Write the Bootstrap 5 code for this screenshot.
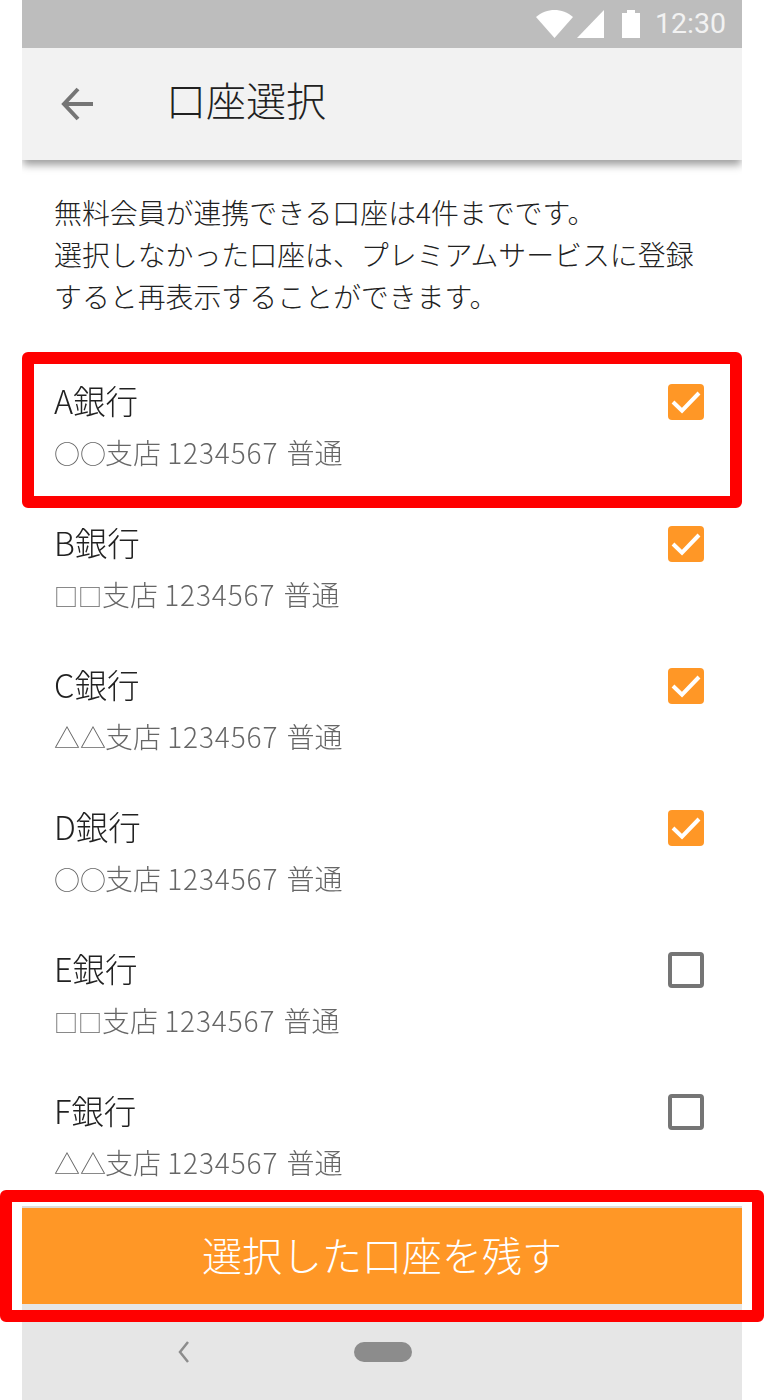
<!DOCTYPE html>
<html lang="ja">
<head>
<meta charset="utf-8">
<title>口座選択</title>
<link href="https://cdn.jsdelivr.net/npm/bootstrap@5.3.0/dist/css/bootstrap.min.css" rel="stylesheet">
<style>
html,body{margin:0;background:#fff;}
body{font-family:"Noto Sans CJK JP","Noto Sans",sans-serif;font-weight:300;color:#212121;height:1400px;overflow:hidden;}
.phone{width:720px;height:1400px;margin-left:22px;}
.statusbar{height:48px;background:#bdbdbd;color:#f2f2f2;padding-right:16px;font-family:Roboto,sans-serif;font-size:28.500px;font-weight:400;}
.appbar{height:112px;background:#f2f2f2;box-shadow:0 6px 8px -1px rgba(0,0,0,.38);clip-path:inset(0 0 -24px 0);padding-left:38px;position:relative;}
.appbar-title{font-size:40px;margin-left:70px;line-height:1;margin-top:-10px;}
.intro{font-size:27.9px;line-height:42px;padding:31px 33px 0 32px;margin:0;height:194px;}
.acct{height:142px;padding:28px 38px 0 32px;}
.acct-name{font-size:32.500px;line-height:36px;}
.acct-sub{font-size:28px;line-height:36px;margin-top:16px;color:#666;}
.sym{font-size:26px;margin-right:-1px;}
.sym-sq{font-size:24px;}
.num{letter-spacing:.9px;margin-right:2px;}
.box{width:36px;height:36px;border-radius:4px;flex:none;margin-top:2px;}
.box-on{background:#ff9726;}
.box-off{border:4px solid #757575;}
.list-area{height:852px;overflow:hidden;will-change:transform;}
.cta-wrap{height:98px;}
.cta{display:block;width:100%;height:98px;border:0;border-top:2px solid #dcdcdc;border-radius:0;background:#ff9726;color:#fff;font-size:40px;font-weight:300;padding:0 0 4px;}
.navbar-bottom{height:96px;background:#e6e6e6;padding:36px 0 0 154px;}
.pill{width:58px;height:20px;border-radius:10px;background:#8c8c8c;margin:2px 0 0 162px;}
.hl{position:absolute;border:12px solid #f00;border-radius:6px;pointer-events:none;}
.hl-a{left:22px;top:352px;width:720px;height:156px;}
.hl-b{left:0;top:1190px;width:764px;height:132px;}
.gap-batt{margin:0 15px 0 18px;}
</style>
</head>
<body>
<div class="phone">
  <div class="statusbar d-flex align-items-center justify-content-end">
    <svg width="37" height="28" viewBox="0 0 37 28" class="me-1"><path d="M0 7C5 2.500 12 0 18.500 0S32 2.500 37 7L18.500 28z" fill="#fff"/></svg>
    <svg width="27" height="28" viewBox="0 0 27 28"><path d="M27 0v28H0z" fill="#fff"/></svg>
    <svg width="18" height="28" viewBox="0 0 18 28" class="gap-batt"><path d="M5 0h8v3h5v25H0V3h5z" fill="#fff"/></svg>
    <span>12:30</span>
  </div>
  <header class="appbar d-flex align-items-center">
    <svg width="36" height="36" viewBox="0 0 36 36"><path d="M33 18H5M18 3 4 18l14 15" fill="none" stroke="#757575" stroke-width="4"/></svg>
    <div class="appbar-title">口座選択</div>
  </header>
  <p class="intro">無料会員が連携できる口座は4件までです。<br>選択しなかった口座は、プレミアムサービスに登録<br>すると再表示することができます。</p>
  <div class="list-area">
    <div class="acct d-flex justify-content-between"><div><div class="acct-name">A銀行</div><div class="acct-sub"><span class="sym">○○</span>支店 <span class="num">1234567</span> 普通</div></div><div class="box box-on"><svg width="36" height="36" viewBox="0 0 36 36"><path d="M5 18l9 8.700L31 9" fill="none" stroke="#fff" stroke-width="4"/></svg></div></div>
    <div class="acct d-flex justify-content-between"><div><div class="acct-name">B銀行</div><div class="acct-sub"><span class="sym-sq">□□</span>支店 <span class="num">1234567</span> 普通</div></div><div class="box box-on"><svg width="36" height="36" viewBox="0 0 36 36"><path d="M5 18l9 8.700L31 9" fill="none" stroke="#fff" stroke-width="4"/></svg></div></div>
    <div class="acct d-flex justify-content-between"><div><div class="acct-name">C銀行</div><div class="acct-sub"><span class="sym">△△</span>支店 <span class="num">1234567</span> 普通</div></div><div class="box box-on"><svg width="36" height="36" viewBox="0 0 36 36"><path d="M5 18l9 8.700L31 9" fill="none" stroke="#fff" stroke-width="4"/></svg></div></div>
    <div class="acct d-flex justify-content-between"><div><div class="acct-name">D銀行</div><div class="acct-sub"><span class="sym">○○</span>支店 <span class="num">1234567</span> 普通</div></div><div class="box box-on"><svg width="36" height="36" viewBox="0 0 36 36"><path d="M5 18l9 8.700L31 9" fill="none" stroke="#fff" stroke-width="4"/></svg></div></div>
    <div class="acct d-flex justify-content-between"><div><div class="acct-name">E銀行</div><div class="acct-sub"><span class="sym-sq">□□</span>支店 <span class="num">1234567</span> 普通</div></div><div class="box box-off"></div></div>
    <div class="acct d-flex justify-content-between"><div><div class="acct-name">F銀行</div><div class="acct-sub"><span class="sym">△△</span>支店 <span class="num">1234567</span> 普通</div></div><div class="box box-off"></div></div>
  </div>
  <div class="cta-wrap"><button class="btn cta" type="button">選択した口座を残す</button></div>
  <div class="navbar-bottom d-flex align-items-start">
    <svg width="16" height="24" viewBox="0 0 16 24"><path d="M12 2 4 12l8 10" fill="none" stroke="#8c8c8c" stroke-width="2.500"/></svg>
    <div class="pill"></div>
  </div>
</div>
<div class="hl hl-a"></div>
<div class="hl hl-b"></div>
<script src="https://cdn.jsdelivr.net/npm/bootstrap@5.3.0/dist/js/bootstrap.bundle.min.js"></script>
</body>
</html>
